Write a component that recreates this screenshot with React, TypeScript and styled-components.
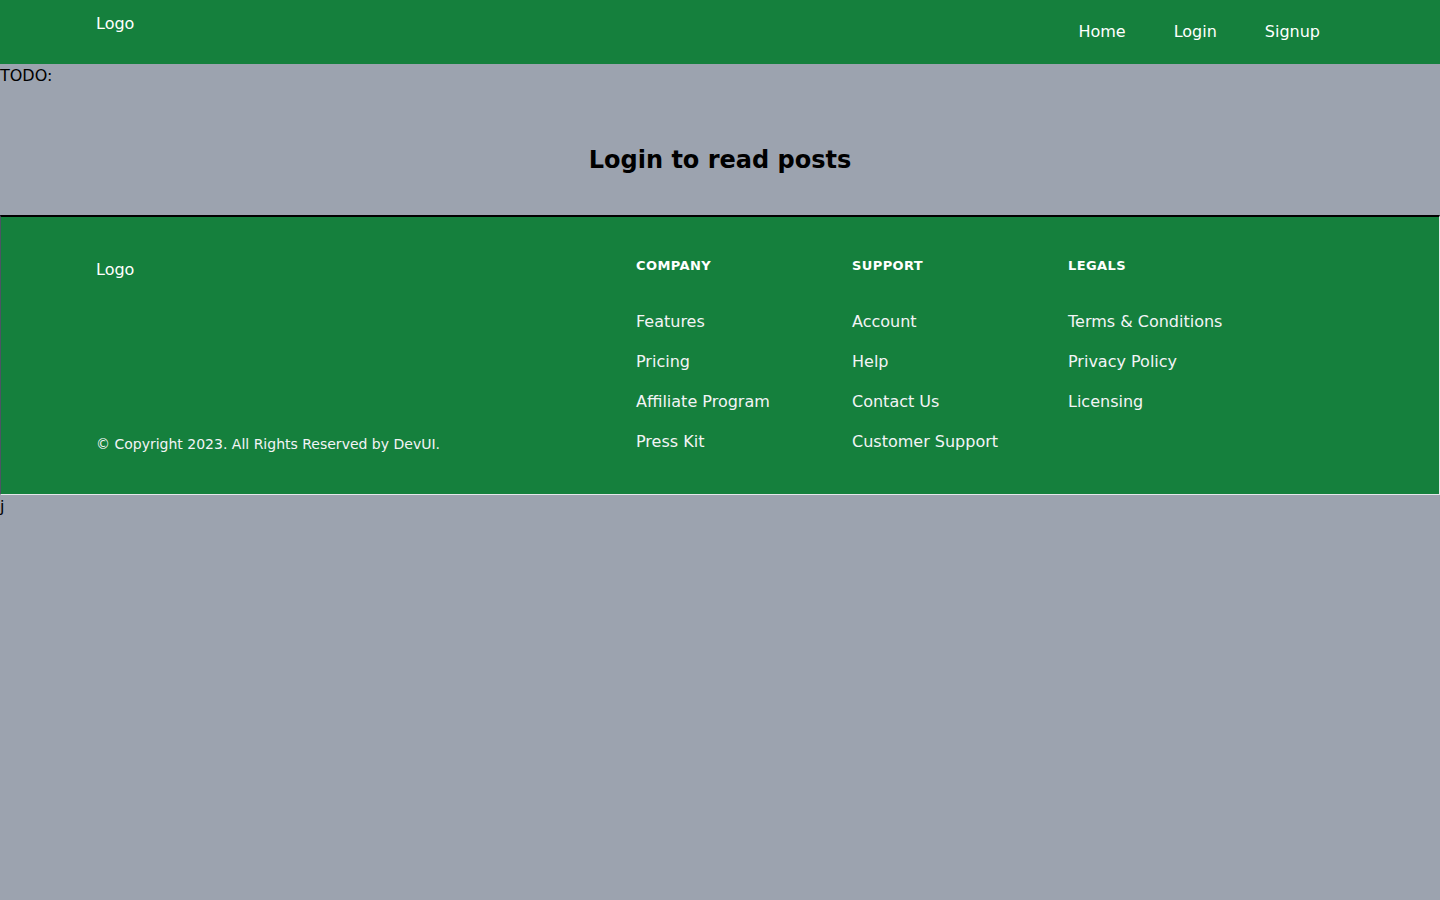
import React from 'react'
import styled, {createGlobalStyle} from 'styled-components'

const GlobalStyle = createGlobalStyle`
    body {
        margin: 0;
        background: #9ca3af;
        font-family: "DejaVu Sans", sans-serif;
        font-size: 16px;
        color: #000;
    }
`;

const Navbar = styled.header`
    height: 64px;
    background: #15803d;
    color: white;
    display: flex;
    justify-content: space-between;
    align-items: center;
    padding: 0 96px;
    box-sizing: border-box;
`;

const Logo = styled.div`
    align-self: flex-start;
    margin-top: 14px;
`;

const NavList = styled.nav`
    display: flex;
    align-items: center;
    margin-bottom: 2px;
`;

const NavLink = styled.a`
    color: white;
    text-decoration: none;
    padding: 0 24px;
`;

const Note = styled.div`
    line-height: 23px;
`;

const Section = styled.section`
    padding: 59px 0 41px;
    text-align: center;
`;

const Title = styled.h1`
    margin: 0;
    font-size: 24px;
    line-height: 28px;
    font-weight: 700;
`;

const Footer = styled.footer`
    background: #15803d;
    color: #f3f4f6;
    border-top: 2px solid #000;
    border-left: 1px solid #4b5563;
    border-right: 1px solid #e5e7eb;
    border-bottom: 1px solid #e5e7eb;
    padding: 42px 0 40px 95px;
    display: grid;
    grid-template-columns: 540px 216px 216px 216px;
`;

const Brand = styled.div`
    display: flex;
    flex-direction: column;
    justify-content: space-between;
`;

const BrandLogo = styled.div`
    margin-top: 1px;
    color: white;
`;

const Copyright = styled.p`
    margin: 0 0 1px;
    font-size: 14px;
    line-height: 17px;
`;

const Column = styled.div`
    display: flex;
    flex-direction: column;
`;

const ColumnTitle = styled.h4`
    margin: 0 0 37px;
    font-size: 13px;
    line-height: 14px;
    font-weight: 700;
    letter-spacing: 0.4px;
    text-transform: uppercase;
    color: white;
`;

const FooterLink = styled.a`
    color: #f3f4f6;
    text-decoration: none;
    line-height: 24px;
    & + & {
        margin-top: 16px;
    }
`;

const columns = [
    {title: 'Company', links: ['Features', 'Pricing', 'Affiliate Program', 'Press Kit']},
    {title: 'Support', links: ['Account', 'Help', 'Contact Us', 'Customer Support']},
    {title: 'Legals', links: ['Terms & Conditions', 'Privacy Policy', 'Licensing']},
];

export default function App(): JSX.Element {
    return <>
        <GlobalStyle/>
        <Navbar>
            <Logo>Logo</Logo>
            <NavList>
                <NavLink href="#">Home</NavLink>
                <NavLink href="#">Login</NavLink>
                <NavLink href="#">Signup</NavLink>
            </NavList>
        </Navbar>
        <Note>TODO:</Note>
        <Section>
            <Title>Login to read posts</Title>
        </Section>
        <Footer>
            <Brand>
                <BrandLogo>Logo</BrandLogo>
                <Copyright>© Copyright 2023. All Rights Reserved by DevUI.</Copyright>
            </Brand>
            {columns.map(col => <Column key={col.title}>
                <ColumnTitle>{col.title}</ColumnTitle>
                {col.links.map(l => <FooterLink key={l} href="#">{l}</FooterLink>)}
            </Column>)}
        </Footer>
        <Note>j</Note>
    </>
}
